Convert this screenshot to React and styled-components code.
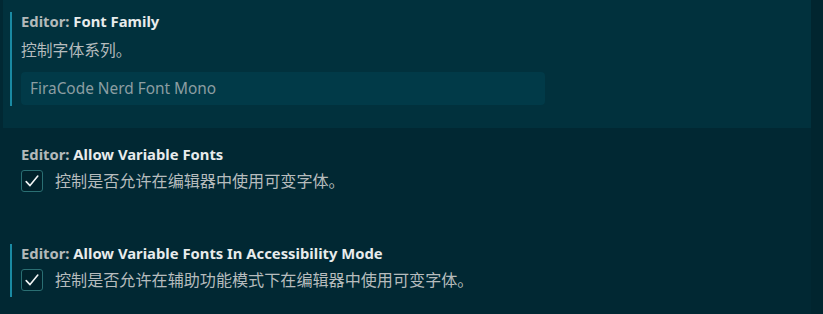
import styled, { createGlobalStyle } from 'styled-components';

const GlobalStyle = createGlobalStyle`
	html, body {
		margin: 0;
		padding: 0;
		background: #012833;
	}
	body {
		font-family: 'Noto Sans', 'Noto Sans CJK SC', sans-serif;
		-webkit-font-smoothing: antialiased;
	}
`;

const Page = styled.div`
	width: 823px;
	height: 314px;
	overflow: hidden;
	background: #012833;
	display: flex;
`;

const List = styled.div`
	width: 808px;
	margin-left: 3px;
	display: flex;
	flex-direction: column;
`;

const Scrollbar = styled.div`
	flex: 1;
	background: #01252f;
`;

const Item = styled.div`
	position: relative;
	padding: ${(p) => p.$top}px 18px 0;
	background: ${(p) => (p.$hover ? '#01313d' : 'transparent')};
	height: ${(p) => p.$height}px;
	box-sizing: border-box;
`;

const FocusLine = styled.div`
	position: absolute;
	left: 7px;
	top: ${(p) => p.$top}px;
	height: ${(p) => p.$h}px;
	width: 2px;
	background: #1a8aa3;
`;

const Title = styled.div`
	font-size: 14.8px;
	font-weight: 700;
	line-height: 20px;
	color: #e8ecec;
	white-space: nowrap;
`;

const Category = styled.span`
	color: #b3b9ba;
`;

const Desc = styled.div`
	margin-top: 9px;
	font-size: 15.8px;
	line-height: 20px;
	color: #b6bcbd;
`;

const Input = styled.div`
	margin-top: 12px;
	width: 524px;
	height: 33px;
	box-sizing: border-box;
	border-radius: 4px;
	background: #013a48;
	padding: 0 9px;
	display: flex;
	align-items: center;
	font-size: 15.4px;
	color: #8c9ea2;
`;

const CheckRow = styled.div`
	margin-top: 6px;
	display: flex;
	align-items: center;
	gap: 12px;
	font-size: 16.1px;
	line-height: 22px;
	color: #b6bcbd;
`;

const Box = styled.div`
	width: 22px;
	height: 22px;
	box-sizing: border-box;
	border: 1px solid #2a6f73;
	border-radius: 3px;
	background: #01222b;
	display: flex;
	align-items: center;
	justify-content: center;
`;

function Check() {
	return (
		<Box>
			<svg width="16" height="16" viewBox="0 0 16 16">
				<path d="M2.2 8.6 L6 12.6 L13.8 3" fill="none" stroke="#f2f5f5" strokeWidth="1.6" strokeLinecap="round" strokeLinejoin="round" />
			</svg>
		</Box>
	);
}

export default function App() {
	return (
		<>
			<GlobalStyle />
			<Page>
				<List>
					<Item $hover $top={11} $height={128}>
						<FocusLine $top={12} $h={94} />
						<Title>
							<Category>Editor: </Category>Font Family
						</Title>
						<Desc>控制字体系列。</Desc>
						<Input>FiraCode Nerd Font Mono</Input>
					</Item>
					<Item $top={16} $height={108}>
						<Title>
							<Category>Editor: </Category>Allow Variable Fonts
						</Title>
						<CheckRow>
							<Check />
							控制是否允许在编辑器中使用可变字体。
						</CheckRow>
					</Item>
					<Item $top={7} $height={78}>
						<FocusLine $top={8} $h={53} />
						<Title>
							<Category>Editor: </Category>Allow Variable Fonts In Accessibility Mode
						</Title>
						<CheckRow>
							<Check />
							控制是否允许在辅助功能模式下在编辑器中使用可变字体。
						</CheckRow>
					</Item>
				</List>
				<Scrollbar />
			</Page>
		</>
	);
}
